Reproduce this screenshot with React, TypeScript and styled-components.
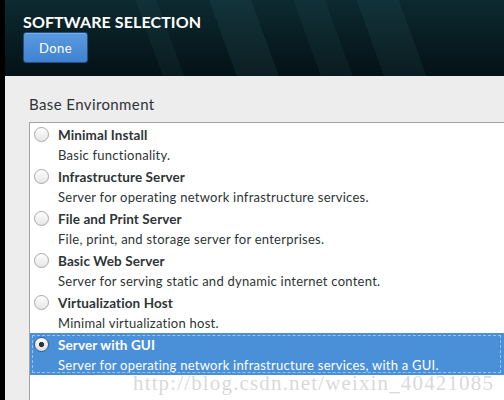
import { createGlobalStyle, styled } from "styled-components";

const GlobalStyle = createGlobalStyle`
  html, body {
    margin: 0;
    padding: 0;
    background: #000;
  }
  body {
    width: 504px;
    height: 400px;
    overflow: hidden;
    font-family: Lato, "Liberation Sans", sans-serif;
  }
`;

const Page = styled.div`
  position: relative;
  display: flex;
  width: 504px;
  height: 400px;
  background: #000;
  overflow: hidden;
`;

const Main = styled.div`
  margin-left: 5px;
  flex: 1;
  display: flex;
  flex-direction: column;
  min-width: 0;
`;

const Header = styled.header`
  flex-shrink: 0;
  height: 76px;
  box-sizing: border-box;
  padding: 12px 0 0 18px;
  background:
    linear-gradient(70deg,
      transparent 0 30%,
      rgba(60, 110, 120, 0.10) 30% 34%,
      transparent 34% 44%,
      rgba(60, 110, 120, 0.14) 44% 52%,
      transparent 52% 60%,
      rgba(60, 110, 120, 0.10) 60% 66%,
      transparent 66% 72%,
      rgba(60, 110, 120, 0.12) 72% 80%,
      transparent 80% 100%),
    linear-gradient(180deg, #0c2a30 0%, #071b20 60%, #041216 100%);
`;

const Title = styled.h1`
  margin: 0;
  font-size: 16px;
  line-height: 20px;
  font-weight: 700;
  color: #fff;
  letter-spacing: 0.1px;
`;

const DoneButton = styled.button`
  display: block;
  margin-top: 0;
  width: 65px;
  height: 31px;
  border: 1px solid #1f4f86;
  border-radius: 3px;
  background: linear-gradient(180deg, #5a9ae0 0%, #3f82d0 100%);
  color: #fff;
  font-family: inherit;
  font-size: 13px;
  letter-spacing: 0.4px;
  box-shadow: inset 0 1px 0 rgba(255, 255, 255, 0.2);
  cursor: pointer;
`;

const Content = styled.main`
  flex: 1;
  display: flex;
  flex-direction: column;
  background: #ededed;
  padding: 18px 0 0 24px;
  min-height: 0;
`;

const SectionLabel = styled.div`
  font-size: 15px;
  line-height: 20px;
  letter-spacing: 0.4px;
  color: #2e3436;
  margin-bottom: 8px;
`;

const ListBox = styled.div`
  flex: 1;
  border-left: 1px solid #a3a3a3;
  border-top: 1px solid #a3a3a3;
  background: #fff;
`;

const Item = styled.div<{ $selected?: boolean }>`
  position: relative;
  height: 42px;
  box-sizing: border-box;
  padding: 3px 0 0 4px;
  display: grid;
  grid-template-columns: 15px 1fr;
  column-gap: 9px;
  background: ${(p) => (p.$selected ? "#4a90d9" : "transparent")};
  color: ${(p) => (p.$selected ? "#fff" : "#2e3436")};
  ${(p) =>
    p.$selected &&
    `
    &::after {
      content: "";
      position: absolute;
      inset: 2px 3px 2px 2px;
      border: 1px dashed rgba(255, 255, 255, 0.45);
    }
  `}
`;

const Radio = styled.span<{ $checked?: boolean }>`
  margin-top: 1px;
  width: 15px;
  height: 15px;
  box-sizing: border-box;
  border-radius: 50%;
  border: 1px solid ${(p) => (p.$checked ? "#2a5a90" : "#a8a8a8")};
  background: ${(p) =>
    p.$checked
      ? "radial-gradient(circle, #2e3436 0 2.4px, transparent 2.9px), linear-gradient(180deg, #ffffff, #dcdcdc)"
      : "linear-gradient(180deg, #ffffff 0%, #e6e6e6 100%)"};
`;

const ItemText = styled.div`
  display: flex;
  flex-direction: column;
`;

const ItemTitle = styled.span`
  font-size: 13.5px;
  line-height: 19px;
  font-weight: 700;
  letter-spacing: 0.1px;
`;

const ItemDesc = styled.span`
  font-size: 13px;
  line-height: 20px;
  letter-spacing: 0.25px;
  white-space: nowrap;
`;

const Watermark = styled.div`
  position: absolute;
  left: 133px;
  top: 375px;
  font-family: "Liberation Serif", serif;
  font-size: 21px;
  line-height: 17px;
  letter-spacing: 1.15px;
  color: rgba(200, 200, 200, 0.7);
  pointer-events: none;
`;

const environments = [
  { title: "Minimal Install", desc: "Basic functionality." },
  { title: "Infrastructure Server", desc: "Server for operating network infrastructure services." },
  { title: "File and Print Server", desc: "File, print, and storage server for enterprises." },
  { title: "Basic Web Server", desc: "Server for serving static and dynamic internet content." },
  { title: "Virtualization Host", desc: "Minimal virtualization host." },
  { title: "Server with GUI", desc: "Server for operating network infrastructure services, with a GUI." },
];

export default function App() {
  const selected = 5;
  return (
    <Page>
      <GlobalStyle />
      <Main>
        <Header>
          <Title>SOFTWARE SELECTION</Title>
          <DoneButton>Done</DoneButton>
        </Header>
        <Content>
          <SectionLabel>Base Environment</SectionLabel>
          <ListBox>
            {environments.map((env, i) => (
              <Item key={env.title} $selected={i === selected}>
                <Radio $checked={i === selected} />
                <ItemText>
                  <ItemTitle>{env.title}</ItemTitle>
                  <ItemDesc>{env.desc}</ItemDesc>
                </ItemText>
              </Item>
            ))}
          </ListBox>
        </Content>
      </Main>
      <Watermark>http://blog.csdn.net/weixin_40421085</Watermark>
    </Page>
  );
}
